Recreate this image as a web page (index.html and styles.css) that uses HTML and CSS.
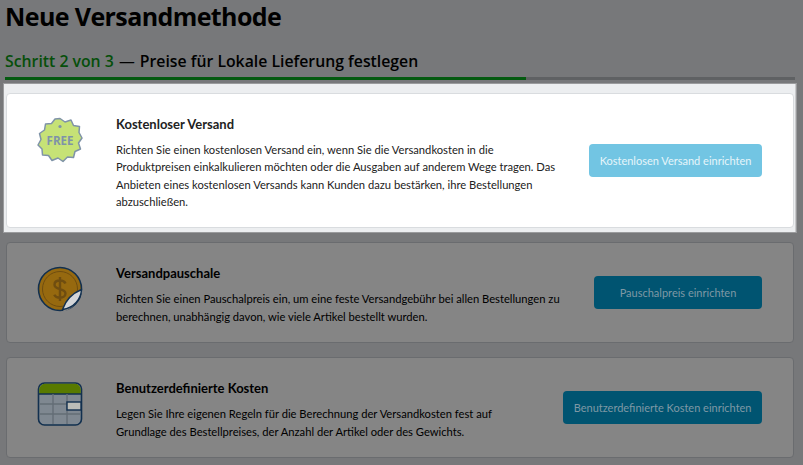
FILE: index.html
```html
<!DOCTYPE html>
<html lang="de">
<head>
  <meta charset="UTF-8" />
  <title>Neue Versandmethode</title>
  <link rel="stylesheet" href="styles.css">
</head>
<body>
  <h1>Neue Versandmethode</h1>

  <div class="step-title"><span class="step-count">Schritt 2 von 3</span> <span class="step-dash">—</span> Preise für Lokale Lieferung festlegen</div>
  <div class="progress"><div class="progress-bar"></div></div>

  <div class="spotlight">
    <div class="method method-free">
      <div class="method-main">
        <div class="method-icon">
          <svg width="46" height="46" viewBox="0 0 46 46">
            <polygon points="23,1.500 28,5 34,3 36.500,8.500 42.500,9.500 42,15.500 45,21 41.500,26 43.500,32 38,34.500 36.500,40.500 30.500,40 26,44.500 21,41 15,43.500 11.500,38.500 5.500,38 5,32 1,28 4,22.500 2.500,16.500 7.500,13 8.500,7 14.500,6.500 18,2" fill="#c6e276" stroke="#7f93a8" stroke-width="1.500" stroke-linejoin="round"/>
            <circle cx="23" cy="9.500" r="1.600" fill="#7f93a8"/>
            <text x="23" y="28" text-anchor="middle" class="free-text">FREE</text>
          </svg>
        </div>
        <div class="method-body">
          <h2>Kostenloser Versand</h2>
          <p>Richten Sie einen kostenlosen Versand ein, wenn Sie die Versandkosten in die Produktpreisen einkalkulieren möchten oder die Ausgaben auf anderem Wege tragen. Das Anbieten eines kostenlosen Versands kann Kunden dazu bestärken, ihre Bestellungen abzuschließen.</p>
        </div>
      </div>
      <button class="btn btn-light">Kostenlosen Versand einrichten</button>
    </div>
  </div>

  <div class="method method-flat">
    <div class="method-main">
      <div class="method-icon">
        <svg width="46" height="46" viewBox="0 0 46 46">
          <circle cx="23" cy="23" r="21.500" fill="#96690f" stroke="#12304f" stroke-width="1.600"/>
          <circle cx="23" cy="23" r="17.500" fill="none" stroke="#6f4d10" stroke-width="1"/>
          <path d="M28.500 17.500c-.8-1.800-3-3-5.500-3-3.200 0-5.500 1.600-5.500 4.200 0 5.600 11 3.200 11 8.800 0 2.700-2.500 4.200-5.500 4.200-2.600 0-4.800-1-5.800-3M23 11v24" fill="none" stroke="#6f4d10" stroke-width="2.400"/>
          <path d="M25 46C33 45 40 38 46 24L36 34z" fill="#858585"/>
          <path d="M25.500 43.500C29 33 36 27 44.500 23.500 44 33 37 42 25.500 43.500z" fill="#d4d6d8" stroke="#12304f" stroke-width="1.400" stroke-linejoin="round"/>
        </svg>
      </div>
      <div class="method-body">
        <h2>Versandpauschale</h2>
        <p>Richten Sie einen Pauschalpreis ein, um eine feste Versandgebühr bei allen Bestellungen zu berechnen, unabhängig davon, wie viele Artikel bestellt wurden.</p>
      </div>
    </div>
    <button class="btn">Pauschalpreis einrichten</button>
  </div>

  <div class="method method-custom">
    <div class="method-main">
      <div class="method-icon">
        <svg width="46" height="46" viewBox="0 0 46 46">
          <rect x="1.500" y="2" width="43" height="42" rx="6" fill="#7f8891" stroke="#12304f" stroke-width="1.600"/>
          <path d="M2.300 13V8a6 6 0 0 1 6-5.200h29.400a6 6 0 0 1 6 5.200v5z" fill="#587a00"/>
          <path d="M2 13h42" stroke="#12304f" stroke-width="1.400"/>
          <path d="M2 23h42M2 33h42M16 13v30M30 13v30" stroke="#646d76" stroke-width="1.400"/>
          <rect x="30" y="21" width="14" height="8" fill="#bcbdb8" stroke="#12304f" stroke-width="1.400"/>
        </svg>
      </div>
      <div class="method-body">
        <h2>Benutzerdefinierte Kosten</h2>
        <p>Legen Sie Ihre eigenen Regeln für die Berechnung der Versandkosten fest auf Grundlage des Bestellpreises, der Anzahl der Artikel oder des Gewichts.</p>
      </div>
    </div>
    <button class="btn">Benutzerdefinierte Kosten einrichten</button>
  </div>
</body>
</html>
```

FILE: styles.css
```css
body {
  margin: 0;
  padding: 0 8px 0 5px;
  height: 465px;
  overflow: hidden;
  box-sizing: border-box;
  background: #77787a;
  color: #000;
  font-family: 'Open Sans', sans-serif;
}

h1 {
  margin: 0;
  font-size: 25px;
  line-height: 33px;
  font-weight: 700;
  letter-spacing: -0.6px;
}

.step-title {
  margin-top: 17px;
  font-size: 15.8px;
  line-height: 22px;
  font-weight: 600;
}

.step-count {
  color: #064f0a;
}

.step-dash {
  font-weight: 400;
  margin: 0 1px;
}

.progress {
  margin-top: 5px;
  height: 3px;
  background: #5f6163;
}

.progress-bar {
  width: 521px;
  height: 3px;
  background: #045a10;
}

.spotlight {
  margin: 4px -1px 0 -1px;
  padding: 9px 1px 4px 2px;
  height: 135px;
  background: #eceef0;
  border-right: 1px solid #c8c9cb;
  box-shadow: 0 0 0 1px #9a9b9d;
}

.method {
  display: flex;
  align-items: center;
  box-sizing: border-box;
  border-radius: 4px;
  padding-right: 31px;
  background: #858585;
  border: 1px solid #6a6c6f;
  font-family: 'Lato', sans-serif;
  font-size: 11.2px;
}

.method-free {
  height: 135px;
  background: #fff;
  border-color: #d9dcdf;
  color: #222;
}

.method-flat {
  margin: 10px 1px 0 1px;
  height: 101px;
}

.method-custom {
  margin: 14px 1px 0 1px;
  height: 101px;
}

.method-main {
  flex: 1;
  min-width: 0;
  display: flex;
  align-items: flex-start;
  padding-top: 5px;
}

.method-icon {
  flex: none;
  width: 109px;
  padding: 1px 0 0 30px;
  box-sizing: border-box;
}

.method-icon svg {
  display: block;
}

.method-body {
  flex: 1;
  min-width: 0;
  padding-right: 25px;
}

h2 {
  margin: 0 0 8px;
  font-size: 13px;
  line-height: 17px;
  font-weight: 700;
}

p {
  margin: 0;
  line-height: 17.5px;
}

.btn {
  flex: none;
  height: 33px;
  min-width: 168px;
  padding: 0 10.5px;
  border: none;
  border-radius: 4px;
  background: #005471;
  color: #7e98a5;
  font-family: inherit;
  font-size: 11px;
}

.btn-light {
  background: #72c5e3;
  color: #e6f5fa;
}

.free-text {
  font-family: 'Open Sans', sans-serif;
  font-size: 11.5px;
  font-weight: 700;
  fill: #7f93a8;
}
```
